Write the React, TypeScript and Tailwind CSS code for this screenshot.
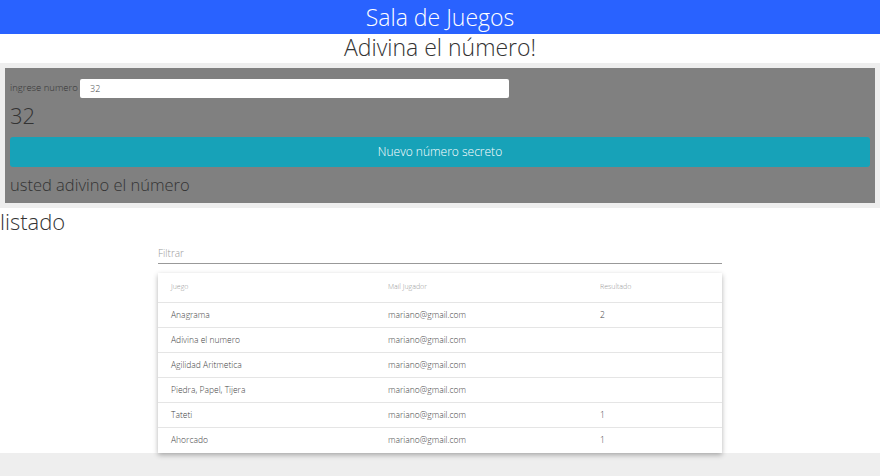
const rows = [
  { juego: "Anagrama", mail: "mariano@gmail.com", res: "2" },
  { juego: "Adivina el numero", mail: "mariano@gmail.com", res: "" },
  { juego: "Agilidad Aritmetica", mail: "mariano@gmail.com", res: "" },
  { juego: "Piedra, Papel, Tijera", mail: "mariano@gmail.com", res: "" },
  { juego: "Tateti", mail: "mariano@gmail.com", res: "1" },
  { juego: "Ahorcado", mail: "mariano@gmail.com", res: "1" },
];

const App = () => {
  return (
    <div className="min-h-[476px] bg-[#eeeeee] font-['Open_Sans',sans-serif] font-light text-[#333]">
      <div className="bg-white pb-0">
        <div className="flex h-[34px] items-center justify-center bg-[#2962ff] text-[23px] text-white">
          Sala de Juegos
        </div>
        <h1 className="h-[29px] text-center text-[23px] leading-[27px]">Adivina el número!</h1>

        <div className="bg-[#eeeeee] px-[5px] py-[5px]">
          <div className="flex flex-col bg-[#808080] px-[5px] pb-[8px] pt-[11px]">
            <div className="flex items-center">
              <span className="w-[70px] text-[9.5px] text-[#333]">ingrese numero</span>
              <input
                readOnly
                value="32"
                className="h-[19px] w-[429px] rounded-[2px] bg-white px-[10px] text-[9px] text-[#444] outline-none"
              />
            </div>
            <div className="mt-[4px] text-[22px] leading-[26px]">32</div>
            <button className="mt-[9px] h-[30px] w-full rounded-[3px] bg-[#17a2b8] text-[12px] text-white">
              Nuevo número secreto
            </button>
            <div className="mt-[8px] text-[16.5px] leading-[20px]">usted adivino el número</div>
          </div>
        </div>

        <div className="text-[22px] leading-[26px]">listado</div>

        <div className="mx-auto mt-[12px] w-[564px]">
          <div className="border-b border-[#999] pb-[2px] text-[10px] text-[#999]">Filtrar</div>
          <div className="relative mt-[9px] -mb-[1px] bg-white shadow-[0_2px_5px_rgba(0,0,0,0.3)]">
            <div className="grid h-[30px] grid-cols-[217px_212px_1fr] items-center border-b border-[#e5e5e5] px-[13px] text-[7px] text-[#999]">
              <span>Juego</span>
              <span>Mail Jugador</span>
              <span>Resultado</span>
            </div>
            {rows.map((r, i) => (
              <div
                key={i}
                className="grid h-[25px] grid-cols-[217px_212px_1fr] items-center border-b border-[#e5e5e5] px-[13px] text-[8.5px] text-[#444] last:border-b-0"
              >
                <span>{r.juego}</span>
                <span>{r.mail}</span>
                <span>{r.res}</span>
              </div>
            ))}
          </div>
        </div>
      </div>
    </div>
  );
};

export default App;
